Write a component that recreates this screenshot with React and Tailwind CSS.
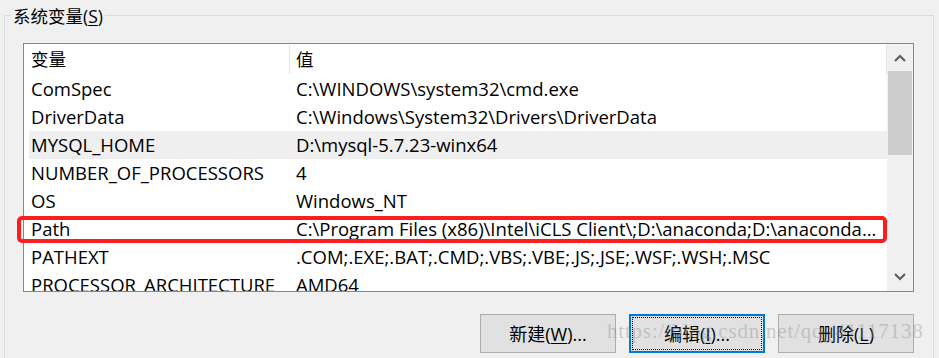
import React from "react";

const rows = [
  ["ComSpec", "C:\\WINDOWS\\system32\\cmd.exe"],
  ["DriverData", "C:\\Windows\\System32\\Drivers\\DriverData"],
  ["MYSQL_HOME", "D:\\mysql-5.7.23-winx64", true],
  ["NUMBER_OF_PROCESSORS", "4"],
  ["OS", "Windows_NT"],
  ["Path", "C:\\Program Files (x86)\\Intel\\iCLS Client\\;D:\\anaconda;D:\\anaconda..."],
  ["PATHEXT", ".COM;.EXE;.BAT;.CMD;.VBS;.VBE;.JS;.JSE;.WSF;.WSH;.MSC"],
  ["PROCESSOR_ARCHITECTURE", "AMD64"],
];

const Chevron = ({ up }) => (
  <svg width="12" height="8" viewBox="0 0 12 8">
    <polyline
      points={up ? "1,7 6,2 11,7" : "1,1 6,6 11,1"}
      fill="none"
      stroke="#606060"
      strokeWidth="2.2"
    />
  </svg>
);

const Btn = ({ label, hot, rest, focused }) => (
  <button
    className={
      focused
        ? "w-[136px] h-[39px] bg-[#e1e1e1] border-2 border-[#0078d7] p-[1px] text-[18px] text-black"
        : "w-[136px] h-[39px] bg-[#e1e1e1] border border-[#adadad] text-[18px] text-black"
    }
  >
    <span
      className={
        focused
          ? "w-full h-full flex items-center justify-center border border-dotted border-black"
          : "w-full h-full flex items-center justify-center"
      }
    >
      {label}(<span className="underline underline-offset-2">{hot}</span>){rest}
    </span>
  </button>
);

export default function App() {
  return (
    <div className="w-[939px] h-[358px] bg-[#f0f0f0] relative overflow-hidden pt-[15px] pl-[4px] font-['Open_Sans','Noto_Sans_CJK_SC',sans-serif] text-black leading-none">
      {/* group box */}
      <div className="w-[930px] h-[400px] border border-[#dcdcdc] relative pt-[27px] pl-[18px]">
        <div className="absolute -top-[11px] left-[6px] bg-[#f0f0f0] px-[2px] text-[17.5px] leading-[22px]">
          系统变量(<span className="underline underline-offset-2">S</span>)
        </div>

        {/* list view */}
        <div className="w-[891px] h-[249px] border border-[#828790] bg-white flex overflow-hidden">
          <div className="flex-1 flex flex-col text-[18.5px]">
            <div className="h-[31px] flex shrink-0 text-[17.5px]">
              <div className="w-[266px] pl-[7px] flex items-center border-r border-[#e5e5e5] my-[1px]">变量</div>
              <div className="flex-1 pl-[6px] flex items-center border-r border-[#e5e5e5] my-[1px]">值</div>
            </div>
            {rows.map(([name, value, hover]) => (
              <div
                key={name}
                className={
                  hover
                    ? "h-[28px] shrink-0 flex items-center ml-[5px] bg-[#efefef]"
                    : "h-[28px] shrink-0 flex items-center ml-[5px]"
                }
              >
                <div className="w-[261px] pl-[2px] whitespace-nowrap">{name}</div>
                <div className="flex-1 pl-[6px] whitespace-nowrap">{value}</div>
              </div>
            ))}
          </div>

          {/* scrollbar */}
          <div className="w-[26px] bg-[#f0f0f0] flex flex-col">
            <div className="h-[27px] flex items-center justify-center">
              <Chevron up />
            </div>
            <div className="h-[84px] mx-[1px] bg-[#cdcdcd]" />
            <div className="flex-1" />
            <div className="h-[27px] flex items-center justify-center pb-[2px]">
              <Chevron />
            </div>
          </div>
        </div>

        {/* buttons */}
        <div className="flex gap-[13px] mt-[22px] ml-[457px]">
          <Btn label="新建" hot="W" rest="..." />
          <Btn label="编辑" hot="I" rest="..." focused />
          <Btn label="删除" hot="L" rest="" />
        </div>
      </div>

      {/* red annotation around Path */}
      <div className="absolute left-[17px] top-[216px] w-[870px] h-[27px] border-4 border-[#fa1e1e] rounded-[5px] pointer-events-none" />

      {/* watermark */}
      <div className="absolute left-[607px] top-[321px] text-[21px] tracking-[0.8px] font-['Liberation_Serif',serif] text-[rgba(140,140,140,0.4)] whitespace-nowrap pointer-events-none">
        https://blog.csdn.net/qq_41117138
      </div>
    </div>
  );
}
